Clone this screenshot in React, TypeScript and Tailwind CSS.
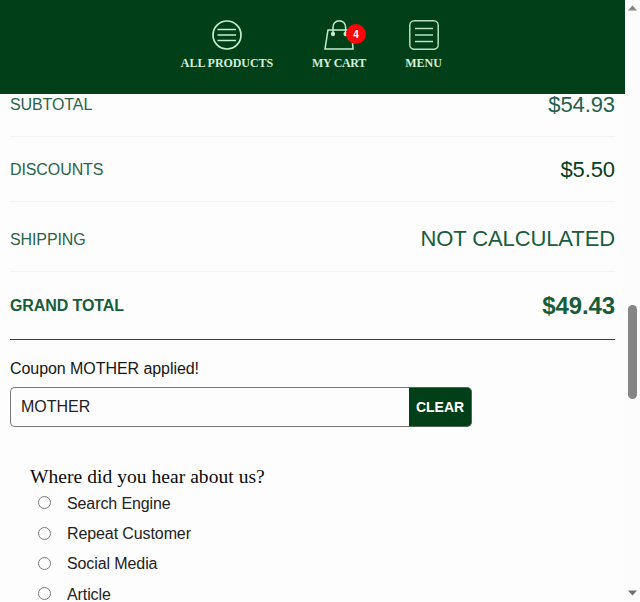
import { useState } from "react";

const SANS_FONT = "font-['Liberation_Sans',Arial,sans-serif]";
const SERIF_FONT = "font-['Liberation_Serif',Georgia,serif]";

const TOTALS = [
  { label: "SUBTOTAL", value: "$54.93", row: "h-[43px] pb-[20px]", color: "text-[#24604a]" },
  { label: "DISCOUNTS", value: "$5.50", row: "h-[65px] pt-[2px]", color: "text-[#073f1c]" },
  { label: "SHIPPING", value: "NOT CALCULATED", row: "h-[70px] pt-[6px]", color: "text-[#175d3e]" },
];

const SOURCES = [
  { label: "Search Engine", height: "h-[31px]" },
  { label: "Repeat Customer", height: "h-[30px]" },
  { label: "Social Media", height: "h-[30px]" },
  { label: "Article", height: "h-[31px]" },
];

function ProductsIcon() {
  return (
    <svg width="32" height="32" viewBox="0 0 32 32" fill="none" stroke="#c3efcf" strokeWidth="1.7">
      <circle cx="16" cy="16" r="14" />
      <path d="M6.5 10.5h18.5M6.5 16h18.5M6.5 21.5h18.5" />
    </svg>
  );
}

function CartIcon() {
  return (
    <svg width="32" height="32" viewBox="0 0 32 32" fill="none" stroke="#c3efcf" strokeWidth="1.5">
      <path d="M5 11h23.500l1.500 19H2z" />
      <path d="M10 15V8a6.3 6.3 0 0 1 12.6 0v7" />
      <circle cx="10" cy="15" r="1.4" fill="#c3efcf" />
      <circle cx="22.6" cy="15" r="1.4" fill="#c3efcf" />
    </svg>
  );
}

function MenuIcon() {
  return (
    <svg width="32" height="32" viewBox="0 0 32 32" fill="none" stroke="#b5dfc0" strokeWidth="1.5">
      <rect x="1.8" y="1.8" width="28.4" height="28.4" rx="4.5" />
      <path d="M7 9.500h18M7 16h18M7 22.500h18" />
    </svg>
  );
}

function Header() {
  const label = `mt-[5px] text-[12px] leading-[14px] font-bold whitespace-nowrap text-[#d3efd9] ${SERIF_FONT}`;

  return (
    <header className="flex h-[94px] w-[625px] shrink-0 bg-[#003f18] pt-[19px] pl-[181px]">
      <a className="flex w-[92px] flex-col items-center">
        <ProductsIcon />
        <span className={`${label} tracking-[-0.06px]`}>ALL PRODUCTS</span>
      </a>
      <a className="relative ml-[39px] flex w-[54px] flex-col items-center">
        <CartIcon />
        <span className="absolute top-[5px] left-[34px] flex size-5 items-center justify-center rounded-full bg-[#f80808] text-[10px] font-bold text-white">
          4
        </span>
        <span className={`${label} tracking-[-0.3px]`}>MY CART</span>
      </a>
      <a className="ml-[39px] flex w-[37px] flex-col items-center">
        <MenuIcon />
        <span className={label}>MENU</span>
      </a>
    </header>
  );
}

function Scrollbar() {
  return (
    <div className="flex h-full w-[15px] shrink-0 flex-col items-center bg-[#fcfcfc]">
      <svg className="mt-[5px]" width="9" height="6" viewBox="0 0 9 6" fill="#858585">
        <path d="M4.5 0.5 9 5.5H0z" />
      </svg>
      <div className="mt-[294px] h-[94px] w-[9px] rounded-full bg-[#858585]" />
      <svg className="mt-auto mb-[6px]" width="9" height="6" viewBox="0 0 9 6" fill="#707070">
        <path d="M4.5 5.5 9 0.5H0z" />
      </svg>
    </div>
  );
}

export default function App() {
  const [coupon, setCoupon] = useState("MOTHER");

  return (
    <div className={`flex h-[602px] w-[640px] overflow-hidden bg-[#fdfdfd] ${SANS_FONT}`}>
      <div className="flex w-[625px] shrink-0 flex-col">
        <Header />

        <main className="pr-[10px] pl-[10px]">
          {TOTALS.map((total) => (
            <div
              key={total.label}
              className={`flex items-center justify-between border-b border-[#f3f3f3] ${total.row} ${total.color}`}
            >
              <span className="text-[16px] leading-5 tracking-[-0.1px] text-[#2b624b]">{total.label}</span>
              <span className="mb-px text-[22px] leading-5 tracking-[-0.1px]">{total.value}</span>
            </div>
          ))}
          <div className="flex h-[68px] items-center justify-between border-b border-[#1f4a43] pt-px font-bold text-[#175d3a]">
            <span className="text-[16px] leading-5 tracking-[-0.1px]">GRAND TOTAL</span>
            <span className="text-[24px] leading-5 tracking-[-0.1px]">$49.43</span>
          </div>

          <p className="mt-[19px] text-[16px] leading-5 tracking-[-0.06px] text-[#161616]">
            Coupon MOTHER applied!
          </p>
          <div className="mt-2 flex h-10 w-[462px]">
            <input
              value={coupon}
              onChange={(e) => setCoupon(e.target.value)}
              className="h-10 w-[399px] rounded-l-[5px] border border-r-0 border-[#777] bg-[#fdfdfd] px-[10px] text-[16px] text-[#222]"
            />
            <button
              type="button"
              onClick={() => setCoupon("")}
              className="h-10 w-[63px] rounded-r-[5px] border border-l-0 border-[#4d6656] bg-[#003f18] text-[14px] font-bold text-white"
            >
              CLEAR
            </button>
          </div>

          <fieldset className="mt-[39px] pl-5">
            <legend className={`h-[22px] text-[19.5px] leading-[22px] tracking-[0.05px] whitespace-nowrap text-[#0a0a0a] ${SERIF_FONT}`}>
              Where did you hear about us?
            </legend>
            {SOURCES.map((source) => (
              <label
                key={source.label}
                className={`flex items-center pl-2 text-[16px] leading-5 tracking-[-0.1px] text-[#222] ${source.height}`}
              >
                <input
                  type="radio"
                  name="source"
                  className="mr-4 mb-[2px] size-[13px] appearance-none rounded-full border border-[#777] bg-white checked:border-4"
                />
                {source.label}
              </label>
            ))}
          </fieldset>
        </main>
      </div>
      <Scrollbar />
    </div>
  );
}
